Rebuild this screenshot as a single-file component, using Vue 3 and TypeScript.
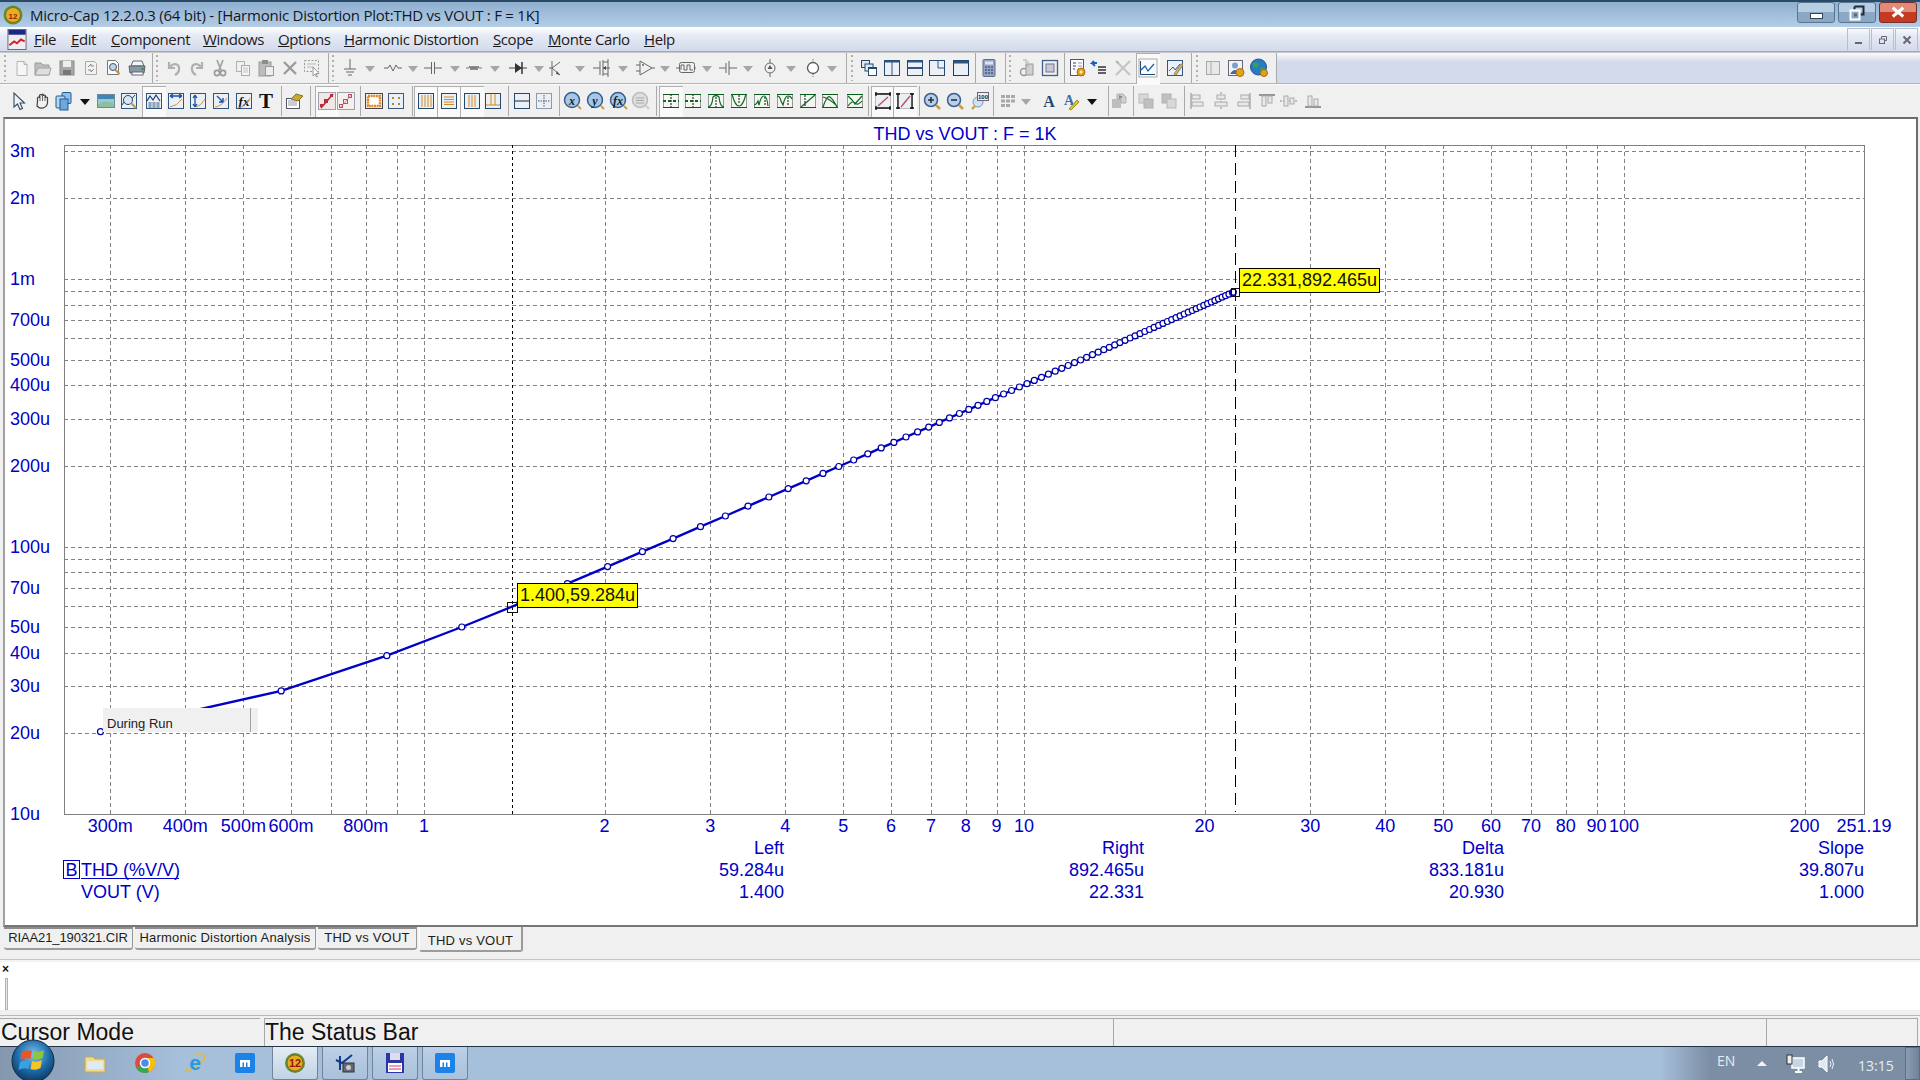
<template>
  <div class="screen">
    <div class="titlebar">
      <svg class="app-logo" viewBox="0 0 20 20">
        <circle cx="10" cy="10" r="9.5" fill="#5f8f3a" />
        <circle cx="10" cy="10" r="7.5" fill="#e0b020" stroke="#8a6a10" />
        <text x="10" y="13.5" text-anchor="middle" class="logo-num">12</text>
      </svg>
      <span class="title-text">Micro-Cap 12.2.0.3 (64 bit) - [Harmonic Distortion Plot:THD vs VOUT : F = 1K]</span>
      <div class="win-btns">
        <button class="wbtn"><span class="glyph-min"></span></button>
        <button class="wbtn">
          <svg viewBox="0 0 16 16" width="16" height="16"><path d="M5.5 1.5h9v8h-3M5.5 1.5v3" fill="none" stroke="#1c2a3a" stroke-width="2" /><rect x="1.5" y="5.5" width="9" height="9" fill="none" stroke="#fff" stroke-width="2" /><rect x="5" y="8.5" width="3" height="3" fill="#666" /></svg>
        </button>
        <button class="wbtn close">
          <svg viewBox="0 0 16 16" width="16" height="14"><path d="M2 2l12 10M14 2L2 12" stroke="#fff" stroke-width="3.4" /></svg>
        </button>
      </div>
    </div>

    <div class="menubar">
      <svg class="doc-icon" viewBox="0 0 20 22">
        <rect x="0.5" y="0.5" width="19" height="21" fill="#eee" stroke="#667" />
        <rect x="1" y="1" width="18" height="5" fill="#1a2a80" />
        <path d="M2 17l5-4 3 2 4-4 4 2" fill="none" stroke="#d02030" stroke-width="2" />
      </svg>
      <span v-for="m in menus" :key="m.label" class="menu-item" :style="{ left: m.x + 'px' }"><u>{{ m.label[0] }}</u>{{ m.label.slice(1) }}</span>
      <div class="mdi-btns">
        <span class="mdi"><i class="mdi-min"></i></span>
        <span class="mdi">
          <svg viewBox="0 0 12 12" width="12" height="12"><path d="M4.5 2.5h5v4h-2M4.500 2.500v2" fill="none" stroke="#667" /><rect x="2.500" y="5" width="5" height="4.500" fill="none" stroke="#667" /></svg>
        </span>
        <span class="mdi">
          <svg viewBox="0 0 12 12" width="12" height="12"><path d="M2.500 2.500l7 7M9.500 2.500l-7 7" stroke="#667" stroke-width="2" /></svg>
        </span>
      </div>
    </div>

    <div class="tool-strip first">
      <div class="tool-row">
        <span v-for="(t, i) in row1" :key="i" class="slot" :class="t.kind" :style="{ marginLeft: t.ml + 'px', width: t.w + 'px' }">
          <svg v-if="t.svg" viewBox="0 0 20 20" :width="t.w" height="20" v-html="t.svg"></svg>
        </span>
      </div>
    </div>
    <div class="tool-strip second">
      <div class="tool-row">
        <span v-for="(t, i) in row2" :key="i" class="slot" :class="t.kind" :style="{ marginLeft: t.ml + 'px', width: t.w + 'px' }">
          <svg v-if="t.svg" viewBox="0 0 20 20" :width="t.w" height="20" v-html="t.svg"></svg>
        </span>
      </div>
    </div>

    <div class="plot-window">
      <svg class="plot" viewBox="5 119 1911 805" width="1911" height="805">
        <g shape-rendering="crispEdges">
          <line v-for="y in gridY" :key="'h' + y" x1="64" x2="1865" :y1="y" :y2="y" class="grid" />
          <line v-for="x in gridX" :key="'v' + x" :x1="x" :x2="x" y1="145" y2="814" class="grid" />
          <rect x="64.5" y="145.5" width="1800" height="669" class="frame" />
        </g>

        <path :d="curvePath" class="curve" />
        <circle v-for="(p, i) in curve" :key="i" :cx="p.x" :cy="p.y" r="3" class="marker" />

        <line x1="512.500" x2="512.500" y1="145" y2="814" class="cursor-left" shape-rendering="crispEdges" />
        <line x1="1235.500" x2="1235.500" y1="145" y2="812" class="cursor-right" shape-rendering="crispEdges" />
        <rect x="507.500" y="602.500" width="10" height="10" class="cursor-box" />
        <rect x="1231.500" y="288.500" width="8" height="8" class="cursor-box" />

        <g>
          <rect x="517.500" y="583.500" width="120" height="24" class="tag" />
          <text x="520" y="601" class="tag-text">1.400,59.284u</text>
          <rect x="1239.500" y="268.500" width="140" height="24" class="tag" />
          <text x="1242" y="286" class="tag-text">22.331,892.465u</text>
        </g>

        <g>
          <rect x="103" y="708" width="155" height="24" class="run-box" />
          <line x1="250.500" x2="250.500" y1="708" y2="732" class="run-rule" />
          <text x="107" y="728" class="run-text">During Run</text>
        </g>

        <text x="965" y="140" text-anchor="middle" class="axis">THD vs VOUT : F = 1K</text>
        <text v-for="l in yLabels" :key="l.t" x="10" :y="l.y + 6" class="axis">{{ l.t }}</text>
        <text v-for="l in xLabels" :key="l.t" :x="l.x" y="832" text-anchor="middle" class="axis">{{ l.t }}</text>

        <rect x="63.500" y="860.500" width="16" height="18" class="legend-box" />
        <text x="65.500" y="876" class="axis">B</text>
        <text x="81" y="876" class="axis">THD (%V/V)</text>
        <line x1="81" x2="179" y1="878.500" y2="878.500" class="legend-line" />
        <text x="81" y="898" class="axis">VOUT (V)</text>

        <g v-for="c in readouts" :key="c.head" text-anchor="end">
          <text :x="c.x" y="854" class="axis">{{ c.head }}</text>
          <text :x="c.x" y="876" class="axis">{{ c.a }}</text>
          <text :x="c.x" y="898" class="axis">{{ c.b }}</text>
        </g>
      </svg>
    </div>

    <div class="tabs">
      <span v-for="t in tabs" :key="t.x" class="tab" :class="{ active: t.active, wide: t.x > 1 }" :style="{ width: t.w + 'px' }">{{ t.label }}</span>
    </div>

    <div class="output">
      <span class="out-close">×</span>
      <span class="out-handle"></span>
    </div>

    <div class="status">
      <span class="pane p1">Cursor Mode</span>
      <span class="pane p2">The Status Bar</span>
      <span class="pane p3"></span>
      <span class="pane p4"></span>
    </div>

    <div class="taskbar">
      <svg class="orb" viewBox="0 0 44 44">
        <defs>
          <radialGradient id="orbFill" cx="50%" cy="35%" r="70%">
            <stop offset="0" stop-color="#7fc4ee" />
            <stop offset="0.55" stop-color="#1c6aa8" />
            <stop offset="1" stop-color="#0b2f57" />
          </radialGradient>
        </defs>
        <circle cx="22" cy="22" r="21" fill="url(#orbFill)" stroke="#10283f" />
        <path d="M11 13q5-3 10-1l-1.500 8q-5-2-10 1z" fill="#e8562a" />
        <path d="M23 12q5 2 10-1l-1.500 8q-5 3-10 1z" fill="#8cc63f" />
        <path d="M9 23q5-3 10-1l-1.500 8q-5-2-10 1z" fill="#3aa0e0" />
        <path d="M21 22q5 2 10-1l-1.500 8q-5 3-10 1z" fill="#f7c325" />
      </svg>

      <span class="tb-icon" style="left:84px">
        <svg viewBox="0 0 22 22" width="22" height="22"><path d="M1 5h8l2 2h10v13H1z" fill="#f2dc8c" stroke="#c2a95a" /><rect x="3" y="9" width="16" height="8" fill="#dfeaf2" /></svg>
      </span>
      <span class="tb-icon" style="left:134px">
        <svg viewBox="0 0 22 22" width="22" height="22"><circle cx="11" cy="11" r="10" fill="#dd4b3e" /><path d="M11 11L2 16a10 10 0 0 0 13 4z" fill="#3aa757" /><path d="M11 6h9a10 10 0 0 1-5 14z" fill="#f4c20d" /><circle cx="11" cy="11" r="4.500" fill="#4a8cf0" stroke="#fff" stroke-width="1.500" /></svg>
      </span>
      <span class="tb-icon" style="left:184px">
        <svg viewBox="0 0 22 22" width="22" height="22"><path d="M3 16C-1 22 6 21 20 8 22 2 18 0 12 3" fill="none" stroke="#e6b93a" stroke-width="1.500" /><text x="11" y="18" text-anchor="middle" class="ie-e">e</text></svg>
      </span>
      <span class="tb-icon" style="left:234px">
        <svg viewBox="0 0 22 22" width="22" height="22"><rect width="20" height="20" x="1" y="1" rx="2" fill="#1b83e8" /><path d="M6 15V8h10v7h-2.500v-4.500h-1.500V15H10v-4.500H8.500V15z" fill="#fff" /></svg>
      </span>

      <div class="tb-tasks">
        <span class="tb-task lit">
          <svg viewBox="0 0 22 22" width="22" height="22"><circle cx="11" cy="11" r="10" fill="#5f8f3a" /><circle cx="11" cy="11" r="8" fill="#e0b020" stroke="#8a6a10" /><text x="11" y="15" text-anchor="middle" class="logo-big">12</text></svg>
        </span>
        <span class="tb-task">
          <svg viewBox="0 0 22 22" width="22" height="22"><path d="M6 4v14M2 8l6 3 10-8" fill="none" stroke="#143a90" stroke-width="2" /><rect x="9" y="11" width="11" height="9" fill="#667" stroke="#333" /><circle cx="14.500" cy="15.500" r="2.500" fill="#ccc" /></svg>
        </span>
        <span class="tb-task">
          <svg viewBox="0 0 22 22" width="22" height="22"><rect x="2" y="1" width="18" height="20" fill="#2a35a8" /><rect x="6" y="1" width="10" height="7" fill="#dde" /><rect x="4" y="11" width="14" height="9" fill="#fff" /><path d="M5 14h12M5 17h12" stroke="#d04060" /></svg>
        </span>
        <span class="tb-task">
          <svg viewBox="0 0 22 22" width="22" height="22"><rect width="20" height="20" x="1" y="1" rx="2" fill="#1b83e8" /><path d="M6 15V8h10v7h-2.500v-4.500h-1.500V15H10v-4.500H8.500V15z" fill="#fff" /></svg>
        </span>
      </div>

      <div class="tray">
        <span class="tray-en">EN</span>
        <span class="tray-up"></span>
        <svg viewBox="0 0 20 20" width="20" height="20" class="tray-net"><rect x="6" y="4" width="12" height="10" fill="#c6d6e6" stroke="#fff" stroke-width="1.500" /><rect x="1" y="1" width="5" height="9" fill="#eee" stroke="#333" /><path d="M9 18h7M12.500 14v4" stroke="#fff" stroke-width="2" /></svg>
        <svg viewBox="0 0 20 20" width="20" height="20" class="tray-vol"><path d="M3 7h3l5-5v16l-5-5H3z" fill="#dfe8f0" stroke="#fff" /><path d="M14 7q2 3 0 6M16 5q3 5 0 10" fill="none" stroke="#eef" /></svg>
        <span class="tray-clock">13:15</span>
        <span class="show-desktop"></span>
      </div>
    </div>
  </div>
</template>

<script setup lang="ts">
type Slot = { kind: string; ml: number; w: number; svg: string };

const menus = [
  { label: 'File', x: 34 },
  { label: 'Edit', x: 71 },
  { label: 'Component', x: 111 },
  { label: 'Windows', x: 203 },
  { label: 'Options', x: 278 },
  { label: 'Harmonic Distortion', x: 344 },
  { label: 'Scope', x: 493 },
  { label: 'Monte Carlo', x: 548 },
  { label: 'Help', x: 644 },
];

// toolbar glyphs, drawn in a 20x20 box
const box = (inner: string, c = '#2f5580') =>
  `<rect x="2.5" y="2.5" width="15" height="15" fill="#eaf0f6" stroke="${c}"/>${inner}`;
const gbox = (inner: string) =>
  `<rect x="2.5" y="3.5" width="15" height="13" fill="#f6f6f0" stroke="#9a9a9a"/><path d="M2 16.500h16M2 3.500h16" stroke="#0a5a20"/><g fill="none" stroke="#0a6a28" stroke-width="1.200">${inner}</g>`;
const lens = (c: string) =>
  `<circle cx="9" cy="9" r="6.500" fill="#b8d0ec" stroke="#3a5f8a" stroke-width="1.500"/><path d="M14 14l4 4" stroke="#c8a040" stroke-width="2.500"/>${c}`;
const ball = (t: string) =>
  `<circle cx="9" cy="9" r="7.500" fill="#a8c6e6" stroke="#3a5f8a" stroke-width="1.500"/><text x="9" y="13.500" text-anchor="middle" style="font:italic bold 12px 'Liberation Serif',serif" fill="#10203a">${t}</text><path d="M15 15l3 3" stroke="#c8a040" stroke-width="2"/>`;
const wire = (d: string, w = 1) => `<path d="${d}" fill="none" stroke="#666" stroke-width="${w}"/>`;

const icons: Record<string, string> = {
  new: '<path d="M5 3.500h7l3 3v11H5z" fill="#f6f6f6" stroke="#b4b4b4"/><path d="M12 3.500v3h3" fill="none" stroke="#b4b4b4"/>',
  open: '<path d="M2 7V5h6l2 2h6v10H2z" fill="#bdbdbd" stroke="#9a9a9a"/><path d="M2 17l3-7h13l-2 7z" fill="#dedede" stroke="#a4a4a4"/>',
  save: '<rect x="3" y="3" width="14" height="14" fill="#a8a8a8" stroke="#8a8a8a"/><rect x="6" y="3" width="8" height="6" fill="#eee"/><rect x="6" y="12" width="8" height="5" fill="#777"/>',
  saveas: '<path d="M4.500 3.500h9l2 2v11h-11z" fill="#f2f2f2" stroke="#aaa"/><path d="M7 9l3-3v2h3M13 11l-3 3v-2H7" fill="none" stroke="#8a8a8a"/>',
  preview: '<path d="M4.500 2.500h8l3 3v11h-11z" fill="#fbfbfb" stroke="#777"/><circle cx="10" cy="9" r="3.500" fill="#c0d4ea" stroke="#456"/><path d="M12.500 12l4 4" stroke="#c8903a" stroke-width="2"/>',
  print: '<path d="M6 3h9l2 5H4z" fill="#f4f4f4" stroke="#667"/><path d="M2 8h16l-1 7H3z" fill="#8a97a6" stroke="#566"/><rect x="5" y="14" width="11" height="3" fill="#fff" stroke="#667"/><rect x="14" y="10" width="3" height="2" fill="#30a040"/>',
  undo: '<path d="M5 4v6h6M6 9c4-5 10-3 9 3-.3 2-2 4-4 5" fill="none" stroke="#b0b0b0" stroke-width="2.200"/>',
  redo: '<path d="M15 4v6H9M14 9c-4-5-10-3-9 3 .3 2 2 4 4 5" fill="none" stroke="#b0b0b0" stroke-width="2.200"/>',
  cut: '<path d="M7 2l4 10M13 2l-4 10" stroke="#a4a4a4" stroke-width="1.800"/><circle cx="7" cy="15" r="2.600" fill="none" stroke="#999" stroke-width="1.600"/><circle cx="13" cy="15" r="2.600" fill="none" stroke="#999" stroke-width="1.600"/>',
  copy: '<rect x="3.500" y="3.500" width="8" height="10" fill="#f0f0f0" stroke="#b0b0b0"/><rect x="8.500" y="7.500" width="8" height="10" fill="#f6f6f6" stroke="#aaa"/><path d="M10 10h5M10 12h5M10 14h5" stroke="#c4c4c4"/>',
  paste: '<rect x="3" y="4" width="12" height="14" fill="#bcbcbc" stroke="#999"/><rect x="6" y="2" width="6" height="4" fill="#8c8c8c"/><rect x="9.500" y="8.500" width="8" height="9" fill="#ededed" stroke="#999"/>',
  del: '<path d="M4 4l12 12M16 4L4 16" stroke="#9c9c9c" stroke-width="2.400"/>',
  selall: '<rect x="2.500" y="2.500" width="14" height="11" fill="none" stroke="#999" stroke-dasharray="2 1.500"/><path d="M5 6h9M5 9h7" stroke="#bbb"/><path d="M11 9v9l2-2 1.500 3 1-.5-1.500-3h3z" fill="#fff" stroke="#999"/>',
  gnd: wire('M10 1v10M4 11h12M6 14h8M8 17h4'),
  res: wire('M1 10h4l2-3 3 6 3-6 2 3h4'),
  cap: wire('M1 10h7.500M11.500 10H19M8.500 4v12M11.500 4v12'),
  ind: wire('M1 10h3l1-2 1 4 1-4 1 4 1-4 1 4 1-4 1 4 1-4 1 2h3', 0.9),
  diode: '<path d="M1 10h18" stroke="#444"/><path d="M7 5v10l7-5z" fill="#333"/><path d="M14 4v12" stroke="#333" stroke-width="1.500"/>',
  bjt: wire('M3 3v15M3 10l8-6M3 10l8 7') + '<path d="M8 13l3 4-4-1z" fill="#555"/><path d="M0 10h3" stroke="#666"/>',
  mos: wire('M1 10h7M8 3v14M11 2v16M11 4h5V1M11 16h5v3M11 10h7M16 4v12') + '<path d="M11 10l3-2v4z" fill="#444"/>',
  opamp: wire('M5 3v14l12-7zM1 7h4M1 13h4M17 10h3M7 7h2M8 6v2'),
  pulse: '<rect x="3.500" y="4.500" width="15" height="10" rx="2" fill="none" stroke="#666"/><path d="M5 12V7h3v5h3V7h3v5h3" fill="none" stroke="#666"/><path d="M0 10h3M18 10h2" stroke="#666"/>',
  batt: wire('M1 10h7M8 5v10M11 3v14M11 10h8'),
  isrc: '<circle cx="10" cy="10" r="5" fill="none" stroke="#666"/><path d="M10 1v4M10 15v4" stroke="#666"/><path d="M10 7l2.500 4h-5z" fill="#555"/>',
  vsrc: '<circle cx="10" cy="10" r="5.500" fill="#fff" stroke="#555" stroke-width="1.300"/><path d="M10 1v3.500M10 15.500V19" stroke="#777" stroke-dasharray="1.500 1"/>',
  cascade: '<rect x="2.500" y="2.500" width="8" height="7" fill="#dfe8f2" stroke="#24486e"/><rect x="6" y="6" width="8" height="7" fill="#dfe8f2" stroke="#24486e"/><rect x="9.500" y="9.500" width="8" height="8" fill="#fff" stroke="#24486e"/><path d="M9.500 10h8" stroke="#24486e" stroke-width="2"/>',
  tilev: box('<path d="M2.500 3.500h15" stroke="#2f5580" stroke-width="2"/><path d="M10 3v15" stroke="#2f5580"/>', '#24486e'),
  tileh: box('<path d="M2.500 3.500h15" stroke="#2f5580" stroke-width="2"/><path d="M2 10h16" stroke="#2f5580" stroke-width="2"/>', '#24486e'),
  corner: box('<path d="M11 2v8h7" fill="none" stroke="#2f5580"/>', '#24486e'),
  maxim: box('<path d="M2.500 4h15" stroke="#2f5580" stroke-width="3"/>', '#1c3c60'),
  calc: '<rect x="4" y="1.500" width="12" height="17" rx="1" fill="#93a4c4" stroke="#5f6f90"/><rect x="6" y="3.500" width="8" height="3" fill="#dce4f0"/><path d="M6 9h2M9 9h2M12 9h2M6 12h2M9 12h2M12 12h2M6 15h2M9 15h2M12 15h2" stroke="#4a5a80" stroke-width="1.500"/>',
  film: '<circle cx="7" cy="14" r="3.500" fill="none" stroke="#999" stroke-width="1.500"/><rect x="9" y="6" width="7" height="11" fill="#d0d0d0" stroke="#999"/><path d="M6 2h4M8 4h4M8 8h4" stroke="#aaa"/>',
  winb: '<rect x="2.500" y="2.500" width="15" height="15" fill="#eee" stroke="#40608c" stroke-width="1.300"/><rect x="6" y="6" width="8" height="8" fill="#c8c8d8" stroke="#778"/>',
  gear: '<rect x="2.500" y="1.500" width="13" height="16" fill="#fbfbfb" stroke="#556"/><path d="M5 5h3M5 8h3M5 11h2" stroke="#3a3a90"/><path d="M10 5h4M10 8h4" stroke="#999"/><circle cx="13" cy="14" r="4" fill="#e0a020" stroke="#a87010"/><circle cx="13" cy="14" r="1.500" fill="#fff3c0"/>',
  list: '<path d="M8 5H3l2-2M3 5l3 3" fill="none" stroke="#1a60c0" stroke-width="1.800"/><path d="M9 9h8M9 12h8M9 15h8" stroke="#333" stroke-width="1.600"/>',
  tools: '<path d="M3 3l14 14M17 3L3 17" stroke="#c4c4c4" stroke-width="2.200"/><path d="M3 3l3 1-1 2z" fill="#aaa"/>',
  scope: '<rect x="1" y="1" width="18" height="18" fill="#fafafa" stroke="#aaa"/><path d="M2.500 3v13.500H17" fill="none" stroke="#24486e"/><path d="M3 12l4-4 3 5 6-7" fill="none" stroke="#1a60b0" stroke-width="1.300"/>',
  pen: box('<path d="M4 13l4-4 2 3 5-6" fill="none" stroke="#1a60b0"/><path d="M9 16l7-10 2 1-7 10z" fill="#e0b050" stroke="#986"/>'),
  panel: '<rect x="3.500" y="3.500" width="13" height="13" fill="#e8e8e8" stroke="#aaa"/><path d="M8 4v12" stroke="#aaa"/>',
  user: '<rect x="2.500" y="2.500" width="14" height="15" fill="#f4f4f4" stroke="#667"/><circle cx="9" cy="7.500" r="3" fill="#7aa0d0"/><path d="M4 16q5-8 10 0z" fill="#3a6ab0"/><circle cx="14" cy="14.500" r="4" fill="#e0a020" stroke="#a87010"/>',
  globe: '<circle cx="9.500" cy="9" r="8" fill="#2a78c8" stroke="#1c5a98"/><path d="M4 5q4-2 6 1l-2 4-4-1zM11 10l5-1-1 5-3 2z" fill="#3aa050"/><circle cx="15" cy="15" r="3.500" fill="#e0a020" stroke="#a87010"/>',

  arrow: '<path d="M6 2v14l3.500-3 2.500 5.500 2.500-1L12 12h4.500z" fill="#eef3f8" stroke="#3a4a60" stroke-width="1.100"/>',
  hand: '<path d="M5.500 10.500V7a1 1 0 0 1 2 0V4.500a1 1 0 0 1 2 0V4a1 1 0 0 1 2 0v1a1 1 0 0 1 2 0v2a1 1 0 0 1 2 0v5a6 6 0 0 1-10.500 3z" fill="#f0f0f0" stroke="#444" stroke-width="1.200"/><path d="M8 5v5M10.500 4v6M13 5v5" stroke="#444" stroke-width="0.800"/>',
  copy3: '<rect x="8" y="1.500" width="9" height="11" rx="1" fill="#8ec0ea" stroke="#235a90"/><rect x="2" y="5" width="9" height="12" rx="1" fill="#b4d6f0" stroke="#235a90"/><rect x="6" y="8" width="8" height="11" fill="#6ea8dc" stroke="#235a90"/>',
  land: '<rect x="1.500" y="3.500" width="17" height="13" fill="#9cc8d4" stroke="#6a8a9c"/><rect x="2" y="4" width="16" height="4" fill="#3e86b4"/><path d="M2 13q8-5 16 0v3H2z" fill="#8cc09c"/>',
  plotzoom: box('<path d="M3 14l4-6 3 3 6-7" fill="none" stroke="#1a3a70"/><circle cx="9" cy="9" r="4.500" fill="#d8e8f6" stroke="#345"/><path d="M12 12l5 5" stroke="#c8a040" stroke-width="2.400"/>'),
  plot: box('<path d="M3 10l3-5 3 4 3-5 4 6" fill="none" stroke="#1a3a70" stroke-width="1.200"/><path d="M4 12h12M4 14h12M4 16h12M6 11v6M10 11v6M14 11v6" stroke="#3a5a80" stroke-width="0.600"/>'),
  scaleh: box('<path d="M4 16q7-1 12-8" fill="none" stroke="#d09050"/><path d="M4 5h12M4 5l3-2M4 5l3 2M16 5l-3-2M16 5l-3 2" fill="none" stroke="#1a50a0" stroke-width="1.300"/>'),
  scalev: box('<path d="M8 16q5-1 9-8" fill="none" stroke="#d09050"/><path d="M7 4v12M7 4L5 7M7 4l2 3M7 16l-2-3M7 16l2-3" fill="none" stroke="#1a50a0" stroke-width="1.300"/>'),
  scaled: box('<path d="M4 16q7-1 12-9" fill="none" stroke="#d09050"/><path d="M6 5l6 6M12 11V7M12 11H8" fill="none" stroke="#1a50a0" stroke-width="1.400"/>'),
  fx: box('<text x="10" y="14.500" text-anchor="middle" style="font:italic bold 13px \'Liberation Serif\',serif" fill="#111">fx</text><path d="M4 17q8-1 12-10" fill="none" stroke="#d09050"/>'),
  bigT: '<text x="10" y="17" text-anchor="middle" style="font:bold 21px \'Liberation Serif\',serif" fill="#111">T</text>',
  tag: '<rect x="2.500" y="7.500" width="13" height="10" fill="#fff" stroke="#556"/><path d="M4 10h9M4 12h9M4 14h9" stroke="#99a"/><path d="M7 8l5-5 7 2-5 5z" fill="#c8a838" stroke="#8a7420"/>',
  peak: '<rect x="1.500" y="1.500" width="17" height="17" fill="#f0e8e4" stroke="#a0a0b0"/><path d="M4 17L16 3" stroke="#b82c40" stroke-width="1.600"/><rect x="7" y="8" width="4" height="4" fill="#b82c40"/><rect x="3" y="13" width="3" height="3" fill="#b82c40"/><rect x="13" y="3" width="3" height="3" fill="#b82c40"/>',
  peak2: '<rect x="1.500" y="1.500" width="17" height="17" fill="#f4f0ee" stroke="#a0a0b0"/><path d="M4 17L16 3" stroke="#d08a90"/><rect x="7.500" y="8.500" width="4" height="4" fill="none" stroke="#c05060"/><rect x="3.500" y="13.500" width="3" height="3" fill="none" stroke="#c05060"/><rect x="12.500" y="3.500" width="3" height="3" fill="none" stroke="#c05060"/>',
  ring: '<rect x="1.500" y="2.500" width="17" height="15" fill="#f4f4f4" stroke="#445"/><rect x="4" y="5" width="12" height="10" fill="#fff" stroke="#e08a20" stroke-width="2.500" stroke-dasharray="2 .6"/>',
  dots: box('<path d="M6 7h2M12 7h2M6 13h2M12 13h2" stroke="#b08a20" stroke-width="2"/>', '#3a5a80'),
  colsR: box('<path d="M6 4v12M9 4v12M12 4v12M15 4v12" stroke="#d08a20"/>', '#24486e'),
  colsH: box('<path d="M5 6h10M5 8.500h10M5 11h10M5 13.500h10" stroke="#d08a20"/>', '#24486e'),
  cols3: box('<path d="M7 4v12M10 4v12M13 4v12" stroke="#d08a20"/>', '#24486e'),
  cols2: box('<path d="M8 3v11M12 3v11M3 14h14" stroke="#d08a20"/>', '#24486e'),
  hline: box('<path d="M3 10h14" stroke="#223"/>', '#24486e'),
  cross: box('<path d="M10 4v12M4 10h12" stroke="#555" stroke-dasharray="1.500 1"/>', '#8a9ab0'),
  ballx: ball('x'),
  bally: ball('y'),
  ballf: ball('fx'),
  ballg: '<circle cx="9" cy="9" r="7.500" fill="#ddd" stroke="#bbb" stroke-width="1.500"/><path d="M5 7h8M5 9.500h8M5 12h8" stroke="#aaa"/><path d="M15 15l3 3" stroke="#ccc" stroke-width="2"/>',
  f1: gbox('<path d="M2 10h16" stroke-width="1.800" stroke-dasharray="3 2"/><path d="M10 3v14" stroke="#333" stroke-dasharray="2 1"/>'),
  f2: gbox('<path d="M2 10h16" stroke-width="1.800" stroke-dasharray="3 2"/><path d="M10 3v14" stroke="#333" stroke-dasharray="2 1"/>'),
  f3: gbox('<path d="M2 16q4 0 5-10 3-3 6 0 1 10 5 10"/><path d="M10 6v10" stroke="#333" stroke-dasharray="2 1"/>'),
  f4: gbox('<path d="M3 3q3 12 7 12t7-12"/><path d="M10 4v9" stroke="#333" stroke-dasharray="2 1"/>'),
  f5: gbox('<path d="M2 14q2 0 4-4l1 4q2-9 5-9t4 10"/><path d="M13 6v9" stroke="#333" stroke-dasharray="2 1"/>'),
  f6: gbox('<path d="M2 5q3 0 4 5l2 4q2-9 5-9t4 3"/><path d="M13 6v9" stroke="#333" stroke-dasharray="2 1"/>'),
  f7: gbox('<path d="M3 16L17 4"/><path d="M7 4v12" stroke="#333" stroke-dasharray="2 1"/>'),
  f8: gbox('<path d="M3 16q4-12 7-10t7 10M3 6q7 2 14 9"/>'),
  f9: gbox('<path d="M3 5l4 4 3 4 7-8M3 15q4-6 7-3t7-2"/>'),
  fit1: box('<path d="M5 15L15 6" stroke="#c05060" stroke-width="1.400"/><path d="M2 3h16M2 17h16M3 1v4M17 1v4M3 15v4M17 15v4" stroke="#111" stroke-width="1.300"/>', '#bbb'),
  fit2: box('<path d="M6 16L15 5" stroke="#c05060" stroke-width="1.400"/><path d="M3 2v16M17 2v16M1 3h4M15 3h4M1 17h4M15 17h4" stroke="#111" stroke-width="1.300"/>', '#bbb'),
  zin: lens('<path d="M6 9h6M9 6v6" stroke="#234" stroke-width="1.600"/>'),
  zout: lens('<path d="M6 9h6" stroke="#234" stroke-width="1.600"/>'),
  z100: '<circle cx="8" cy="11" r="5" fill="#cfe0f2" stroke="#7a9ab8"/><path d="M5 15l-3 3" stroke="#c8a040" stroke-width="2.400"/><rect x="7.500" y="1.500" width="11" height="8" fill="#f0f0f0" stroke="#667"/><text x="13" y="8" text-anchor="middle" style="font:bold 6px \'Liberation Sans\',sans-serif" fill="#223">100</text>',
  grid4: '<path d="M3 4h4v3H3zM8 4h4v3H8zM13 4h4v3h-4zM3 8.500h4v3H3zM8 8.500h4v3H8zM13 8.500h4v3h-4zM3 13h4v3H3zM8 13h4v3H8z" fill="#a8a8a8"/>',
  fontA: '<text x="10" y="16" text-anchor="middle" style="font:bold 16px \'Liberation Serif\',serif" fill="#25486e">A</text>',
  fontB: '<text x="8" y="14" text-anchor="middle" style="font:bold 14px \'Liberation Serif\',serif" fill="#3a6ab0">A</text><path d="M8 18l8-9 2 2-8 8z" fill="#d8c830" stroke="#a09020"/>',
  stack: '<path d="M3 8h9v9H3z" fill="#bdbdbd"/><path d="M8 3l6 0 3 3v6h-5V8H8z" fill="#d0d0d0" stroke="#b0b0b0"/><path d="M10 4l4 2-4 2z" fill="#888"/>',
  front: '<rect x="3" y="3" width="9" height="9" fill="#d8d8d8" stroke="#b8b8b8"/><rect x="8" y="8" width="9" height="9" fill="#bfbfbf" stroke="#b0b0b0"/>',
  back: '<rect x="3" y="3" width="9" height="9" fill="#bfbfbf" stroke="#b0b0b0"/><rect x="8" y="8" width="9" height="9" fill="#d8d8d8" stroke="#b8b8b8"/>',
  alignL: '<path d="M4 2v16" stroke="#888"/><rect x="5" y="4" width="8" height="4" fill="#e8e8e8" stroke="#aaa"/><rect x="5" y="11" width="11" height="4" fill="#e8e8e8" stroke="#aaa"/>',
  alignC: '<path d="M10 1v18" stroke="#888" stroke-dasharray="2 1"/><rect x="6" y="4" width="8" height="4" fill="#e8e8e8" stroke="#aaa"/><rect x="4" y="11" width="12" height="4" fill="#e8e8e8" stroke="#aaa"/>',
  alignR: '<path d="M16 2v16" stroke="#888"/><rect x="7" y="4" width="8" height="4" fill="#e8e8e8" stroke="#aaa"/><rect x="4" y="11" width="11" height="4" fill="#e8e8e8" stroke="#aaa"/>',
  alignT: '<path d="M2 4h16" stroke="#777" stroke-width="1.500"/><rect x="5" y="5" width="4" height="10" fill="#e8e8e8" stroke="#aaa"/><rect x="11" y="5" width="4" height="7" fill="#e8e8e8" stroke="#aaa"/>',
  alignM: '<path d="M1 10h18" stroke="#888" stroke-dasharray="2 1"/><rect x="5" y="5" width="4" height="10" fill="#e8e8e8" stroke="#aaa"/><rect x="11" y="7" width="4" height="6" fill="#e8e8e8" stroke="#aaa"/>',
  alignB: '<path d="M2 16h16" stroke="#777" stroke-width="1.500"/><rect x="5" y="5" width="4" height="10" fill="#e8e8e8" stroke="#aaa"/><rect x="11" y="8" width="4" height="7" fill="#e8e8e8" stroke="#aaa"/>',
};

// [name, centre x] pairs; a "!" suffix means a pressed button
function place(list: [string, number][]): Slot[] {
  let right = 0;
  return list.map(([raw, x]) => {
    const name = raw.replace('!', '');
    const kind = name === 'sep' || name === 'grip' || name === 'dd' || name === 'ddk' ? name : 'btn';
    const w = kind === 'sep' ? 1 : kind === 'grip' ? 2 : kind === 'btn' ? 20 : 10;
    const ml = Math.round(x - w / 2 - right);
    right += ml + w;
    return { kind: kind + (raw.endsWith('!') ? ' on' : ''), ml, w, svg: icons[name] ?? '' };
  });
}

const row1 = place([
  ['grip', 5], ['new', 22], ['open', 43], ['save', 67], ['saveas', 91], ['preview', 113], ['print', 137], ['sep', 152],
  ['grip', 157], ['undo', 174], ['redo', 197], ['cut', 220], ['copy', 243], ['paste', 266], ['del', 290], ['selall', 312], ['sep', 328],
  ['grip', 333], ['gnd', 350], ['dd', 370], ['res', 393], ['dd', 413], ['cap', 433], ['dd', 455], ['ind', 475], ['dd', 495],
  ['diode', 518], ['dd', 539], ['bjt', 559], ['dd', 580], ['mos', 602], ['dd', 623], ['opamp', 645], ['dd', 665],
  ['pulse', 686], ['dd', 707], ['batt', 728], ['dd', 748], ['isrc', 770], ['dd', 791], ['vsrc', 813], ['dd', 832], ['sep', 846],
  ['grip', 852], ['cascade', 869], ['tilev', 892], ['tileh', 915], ['corner', 937], ['maxim', 961], ['sep', 975], ['calc', 989], ['sep', 1005],
  ['grip', 1010], ['film', 1027], ['winb', 1050], ['sep', 1064], ['gear', 1078], ['list', 1099], ['tools', 1123], ['scope!', 1148], ['pen', 1175], ['sep', 1191],
  ['grip', 1197], ['panel', 1213], ['user', 1236], ['globe', 1259], ['sep', 1276],
]);

const row2 = place([
  ['arrow', 18], ['hand', 42], ['copy3', 64], ['ddk', 85], ['land', 106], ['plotzoom', 129], ['plot!', 154], ['scaleh', 176], ['scalev', 198], ['scaled', 221], ['fx', 244], ['bigT', 266], ['sep', 281],
  ['tag', 294], ['sep', 310], ['peak!', 327], ['peak2', 346], ['sep', 360], ['ring', 374], ['dots', 396], ['sep', 412],
  ['colsR!', 426], ['colsH!', 449], ['cols3!', 472], ['cols2', 493], ['sep', 508], ['hline', 522], ['cross', 544], ['sep', 559],
  ['ballx', 573], ['bally', 596], ['ballf', 619], ['ballg', 641], ['sep', 656],
  ['f1!', 671], ['f2', 693], ['f3', 716], ['f4', 739], ['f5', 762], ['f6', 785], ['f7', 808], ['f8', 830], ['f9', 855], ['sep', 868],
  ['fit1!', 883], ['fit2!', 905], ['sep', 919], ['zin', 932], ['zout', 955], ['z100', 980], ['sep', 993],
  ['grid4', 1008], ['dd', 1026], ['fontA', 1049], ['fontB', 1071], ['ddk', 1092], ['sep', 1108], ['stack', 1119], ['sep', 1133],
  ['front', 1146], ['back', 1169], ['sep', 1184], ['alignL', 1197], ['alignC', 1221], ['alignR', 1244], ['alignT', 1267], ['alignM', 1289], ['alignB', 1313],
]);

// plot scales: 600 px per decade in x, 267.5 px per decade in y
const px = (v: number) => 424 + 600 * Math.log10(v);
const py = (u: number) => 814 - 267.5 * Math.log10(u / 10);
const snap = (n: number) => Math.round(n) + 0.5;

const multiples = [1, 2, 3, 4, 5, 6, 7, 8, 9];
const gridX: number[] = [];
for (const d of [0.1, 1, 10, 100]) {
  for (const m of multiples) {
    const x = px(d * m);
    if (x > 65 && x < 1864) gridX.push(snap(x));
  }
}
const gridY: number[] = [];
for (const d of [10, 100, 1000]) {
  for (const m of multiples) {
    const y = py(d * m);
    if (y > 146) gridY.push(snap(y));
  }
}

const thd = (v: number) => 3.55 + 39.8 * v + 12 * Math.exp(-v / 0.35);
const volts = Array.from({ length: 77 }, (_, i) => (i + 1) * 0.289);
volts.push(22.331);
const curve = volts.map((v) => ({ x: +px(v).toFixed(1), y: +py(thd(v)).toFixed(1) }));
const curvePath = 'M' + curve.map((p) => `${p.x} ${p.y}`).join('L');

const yLabels = [
  ['3m', 3000], ['2m', 2000], ['1m', 1000], ['700u', 700], ['500u', 500], ['400u', 400], ['300u', 300], ['200u', 200],
  ['100u', 100], ['70u', 70], ['50u', 50], ['40u', 40], ['30u', 30], ['20u', 20], ['10u', 10],
].map(([t, u]) => ({ t: t as string, y: py(u as number) }));

const xLabels = [
  ['300m', 0.3], ['400m', 0.4], ['500m', 0.5], ['600m', 0.6], ['800m', 0.8], ['1', 1], ['2', 2], ['3', 3], ['4', 4], ['5', 5],
  ['6', 6], ['7', 7], ['8', 8], ['9', 9], ['10', 10], ['20', 20], ['30', 30], ['40', 40], ['50', 50], ['60', 60], ['70', 70],
  ['80', 80], ['90', 90], ['100', 100], ['200', 200], ['251.19', 251.19],
].map(([t, v]) => ({ t: t as string, x: px(v as number) }));

const readouts = [
  { head: 'Left', a: '59.284u', b: '1.400', x: 784 },
  { head: 'Right', a: '892.465u', b: '22.331', x: 1144 },
  { head: 'Delta', a: '833.181u', b: '20.930', x: 1504 },
  { head: 'Slope', a: '39.807u', b: '1.000', x: 1864 },
];

const tabs = [
  { label: 'RIAA21_190321.CIR', w: 129, x: 1 },
  { label: 'Harmonic Distortion Analysis', w: 181, x: 2 },
  { label: 'THD vs VOUT', w: 99, x: 3 },
  { label: 'THD vs VOUT', w: 104, x: 4, active: true },
];
</script>

<style>
html,
body {
  margin: 0;
  background: #f0f0f0;
  overflow: hidden;
}
</style>

<style scoped>
.screen {
  width: 1920px;
  height: 1080px;
  display: flex;
  flex-direction: column;
  overflow: hidden;
  font-family: "Liberation Sans", Arial, sans-serif;
  background: #f0f0f0;
}

.titlebar {
  height: 27px;
  flex: none;
  display: flex;
  align-items: center;
  position: relative;
  box-sizing: border-box;
  border-top: 2px solid #2b4a68;
  background: linear-gradient(#8fafcf, #b4cde7);
}

.app-logo {
  width: 20px;
  height: 20px;
  margin-left: 3px;
  flex: none;
}

.logo-num {
  font: bold 8px "Liberation Sans", sans-serif;
  fill: #a01010;
}

.logo-big {
  font: bold 11px "Liberation Sans", sans-serif;
  fill: #a01010;
}

.ie-e {
  font: bold 21px "Liberation Sans", sans-serif;
  fill: #2a9ae0;
}

.title-text {
  margin-left: 7px;
  font: 15px "Open Sans", sans-serif;
  letter-spacing: -0.24px;
  color: #10181f;
  white-space: nowrap;
}

.win-btns {
  position: absolute;
  right: 3px;
  top: 0;
  display: flex;
  gap: 3px;
}

.wbtn {
  width: 38px;
  height: 21px;
  padding: 0;
  display: flex;
  align-items: center;
  justify-content: center;
  border: 1px solid #5a7590;
  border-radius: 3px;
  background: linear-gradient(#b7cde2 0 50%, #8aa8c4 50% 100%);
}

.wbtn.close {
  border-color: #7a3028;
  background: linear-gradient(#e08a78 0 50%, #c43a22 50% 100%);
}

.glyph-min {
  display: block;
  width: 11px;
  height: 4px;
  margin-top: 7px;
  background: #fff;
  border: 1px solid #33445a;
}

.menubar {
  height: 25px;
  flex: none;
  position: relative;
  box-sizing: border-box;
  border-bottom: 1px solid #a8a8a8;
  background: linear-gradient(#ffffff 0, #e6eaf4 35%, #d3daec 100%);
}

.doc-icon {
  position: absolute;
  left: 7px;
  top: 2px;
  width: 20px;
  height: 21px;
}

.menu-item {
  position: absolute;
  top: 2px;
  font: 15px "Open Sans", sans-serif;
  letter-spacing: -0.4px;
  color: #1a1a1a;
  white-space: nowrap;
}

.mdi-btns {
  position: absolute;
  right: 2px;
  top: 1px;
  display: flex;
  gap: 1px;
}

.mdi {
  width: 23px;
  height: 22px;
  display: flex;
  align-items: center;
  justify-content: center;
  box-sizing: border-box;
  border: 1px solid #b4bfd0;
  border-bottom: 0;
}

.mdi-min {
  display: block;
  width: 7px;
  height: 2px;
  margin-top: 6px;
  background: #667;
}

.tool-strip {
  flex: none;
  box-sizing: border-box;
}

.tool-strip.first {
  height: 32px;
  border-top: 1px solid #c8c8c8;
  border-bottom: 1px solid #b4b4b4;
  background: linear-gradient(#fafafa, #d3daec 30%, #d3daec) 1276px 0 no-repeat, #f0f0f0;
}

.tool-strip.second {
  height: 33px;
  border-top: 1px solid #fafafa;
}

.tool-row {
  height: 100%;
  display: flex;
  align-items: center;
}

.slot {
  flex: none;
  position: relative;
  display: block;
  height: 20px;
}

.slot svg {
  display: block;
  position: relative;
  overflow: visible;
}

.slot.on::before {
  content: "";
  position: absolute;
  inset: -5px -2px -6px -2px;
  background: #fafafa;
  border-top: 1px solid #b0b0b0;
  border-left: 1px solid #b0b0b0;
}

.slot.sep {
  height: 30px;
  background: #a9a9a9;
}

.slot.grip {
  height: 26px;
  background: repeating-linear-gradient(#b0b0b0 0 2px, transparent 2px 5px);
}

.slot.dd::after,
.slot.ddk::after {
  content: "";
  position: absolute;
  left: 0;
  top: 8px;
  border: 5px solid transparent;
  border-top: 6px solid #a6a6a6;
  border-bottom: 0;
}

.slot.ddk::after {
  border-top-color: #111;
}

.plot-window {
  flex: 1;
  min-height: 0;
  margin: 0 2px 0 3px;
  box-sizing: border-box;
  border: 2px solid #777;
  border-color: #6c6c6c #6c6c6c #777 #a0a0a0;
  background: #fff;
  overflow: hidden;
}

.plot {
  display: block;
}

.plot text {
  white-space: pre;
}

.grid {
  stroke: #828282;
  stroke-dasharray: 4 3;
}

.frame {
  fill: none;
  stroke: #808080;
}

.curve {
  fill: none;
  stroke: #0000c8;
  stroke-width: 2.4;
}

.marker {
  fill: #fff;
  stroke: #0000a8;
  stroke-width: 1.2;
}

.cursor-left {
  stroke: #000;
  stroke-dasharray: 3 3;
}

.cursor-right {
  stroke: #000;
  stroke-dasharray: 12 6;
}

.cursor-box {
  fill: none;
  stroke: #111;
}

.tag {
  fill: #ffff00;
  stroke: #000;
}

.tag-text {
  font: 18px "Liberation Sans", sans-serif;
  fill: #111;
}

.run-box {
  fill: #f0f0f0;
}

.run-rule {
  stroke: #a0a0a0;
}

.run-text {
  font: 13px "Liberation Sans", sans-serif;
  fill: #222;
}

.axis {
  font: 18px "Liberation Sans", sans-serif;
  fill: #0000c8;
}

.legend-box {
  fill: none;
  stroke: #0000c8;
}

.legend-line {
  stroke: #0000c8;
}

.tabs {
  height: 33px;
  flex: none;
  display: flex;
  align-items: flex-start;
  padding-left: 4px;
  gap: 2px;
  box-sizing: border-box;
  background: #f0f0f0;
  border-bottom: 1px solid #c4c4c4;
}

.tab {
  height: 23px;
  box-sizing: border-box;
  display: flex;
  align-items: center;
  justify-content: center;
  font-size: 13px;
  letter-spacing: -0.1px;
  color: #1c1c1c;
  border-right: 1px solid #999;
  border-bottom: 2px solid #9c9c9c;
  border-radius: 0 0 3px 3px;
  box-shadow: inset 0 2px 0 #8c8c8c;
  white-space: nowrap;
}

.tab.wide {
  letter-spacing: 0.2px;
}

.tab.active {
  height: 25px;
  padding-top: 4px;
  box-shadow: none;
  border-left: 1px solid #fff;
  border-right: 2px solid #999;
}

.output {
  height: 55px;
  flex: none;
  position: relative;
  box-sizing: border-box;
  background: #fff;
  border-top: 2px solid #f4f4f4;
  border-bottom: 4px solid #f0f0f0;
  box-shadow: inset 0 -1px 0 #eee;
}

.out-close {
  position: absolute;
  left: 2px;
  top: 0;
  font: bold 12px "Liberation Sans", sans-serif;
  line-height: 14px;
  color: #111;
}

.out-handle {
  position: absolute;
  left: 5px;
  top: 16px;
  width: 3px;
  height: 32px;
  box-sizing: border-box;
  border: 1px solid #b4b4b4;
  background: #e4e4e4;
}

.status {
  height: 31px;
  flex: none;
  display: flex;
  align-items: flex-end;
  box-sizing: border-box;
  border-top: 1px solid #b8b8b8;
  background: #f0f0f0;
}

.pane {
  height: 28px;
  box-sizing: border-box;
  border-top: 1px solid #a8a8a8;
  border-left: 1px solid #a8a8a8;
  font-size: 23px;
  line-height: 27px;
  color: #111;
  white-space: nowrap;
}

.p1 {
  width: 260px;
  margin-right: 4px;
  border-left: 0;
  padding-left: 1px;
}

.p2 {
  width: 849px;
}

.p3 {
  width: 653px;
}

.p4 {
  width: 152px;
  border-right: 1px solid #a8a8a8;
}

.taskbar {
  height: 34px;
  flex: none;
  position: relative;
  box-sizing: border-box;
  border-top: 1px solid #243246;
  background: linear-gradient(90deg, #8398ae 0, #a6bfdb 180px, #a6bfdb 1660px, #7b8ea4 1710px, #7b8ea4 100%);
}

.orb {
  position: absolute;
  left: 11px;
  top: -8px;
  width: 44px;
  height: 44px;
}

.tb-icon {
  position: absolute;
  top: 5px;
  width: 22px;
  height: 22px;
}

.tb-icon svg,
.tb-task svg {
  display: block;
}

.tb-tasks {
  position: absolute;
  left: 272px;
  top: 0;
  height: 33px;
  display: flex;
  gap: 4px;
}

.tb-task {
  width: 46px;
  display: flex;
  align-items: center;
  justify-content: center;
  box-sizing: border-box;
  border: 1px solid #70849a;
  border-top: 0;
  border-radius: 0 0 3px 3px;
  background: linear-gradient(#bcd0e6, #a9c1dc);
}

.tb-task.lit {
  background: linear-gradient(#e4ecf4, #c0d2e6);
}

.tray {
  position: absolute;
  inset: 0;
  pointer-events: none;
  color: #e6edf4;
  font: 14px "Open Sans", sans-serif;
}

.tray > * {
  position: absolute;
}

.tray-en {
  left: 1717px;
  top: 4px;
}

.tray-up {
  left: 1757px;
  top: 14px;
  border: 5px solid transparent;
  border-bottom: 5px solid #f0f4f8;
  border-top: 0;
}

.tray-net {
  left: 1786px;
  top: 7px;
}

.tray-vol {
  left: 1816px;
  top: 7px;
}

.tray-clock {
  left: 1858px;
  top: 9px;
}

.show-desktop {
  left: 1905px;
  top: 0;
  width: 15px;
  height: 33px;
  box-sizing: border-box;
  border: 1px solid #5c6e84;
  background: linear-gradient(90deg, #8a9db2, #6f8298);
}
</style>
